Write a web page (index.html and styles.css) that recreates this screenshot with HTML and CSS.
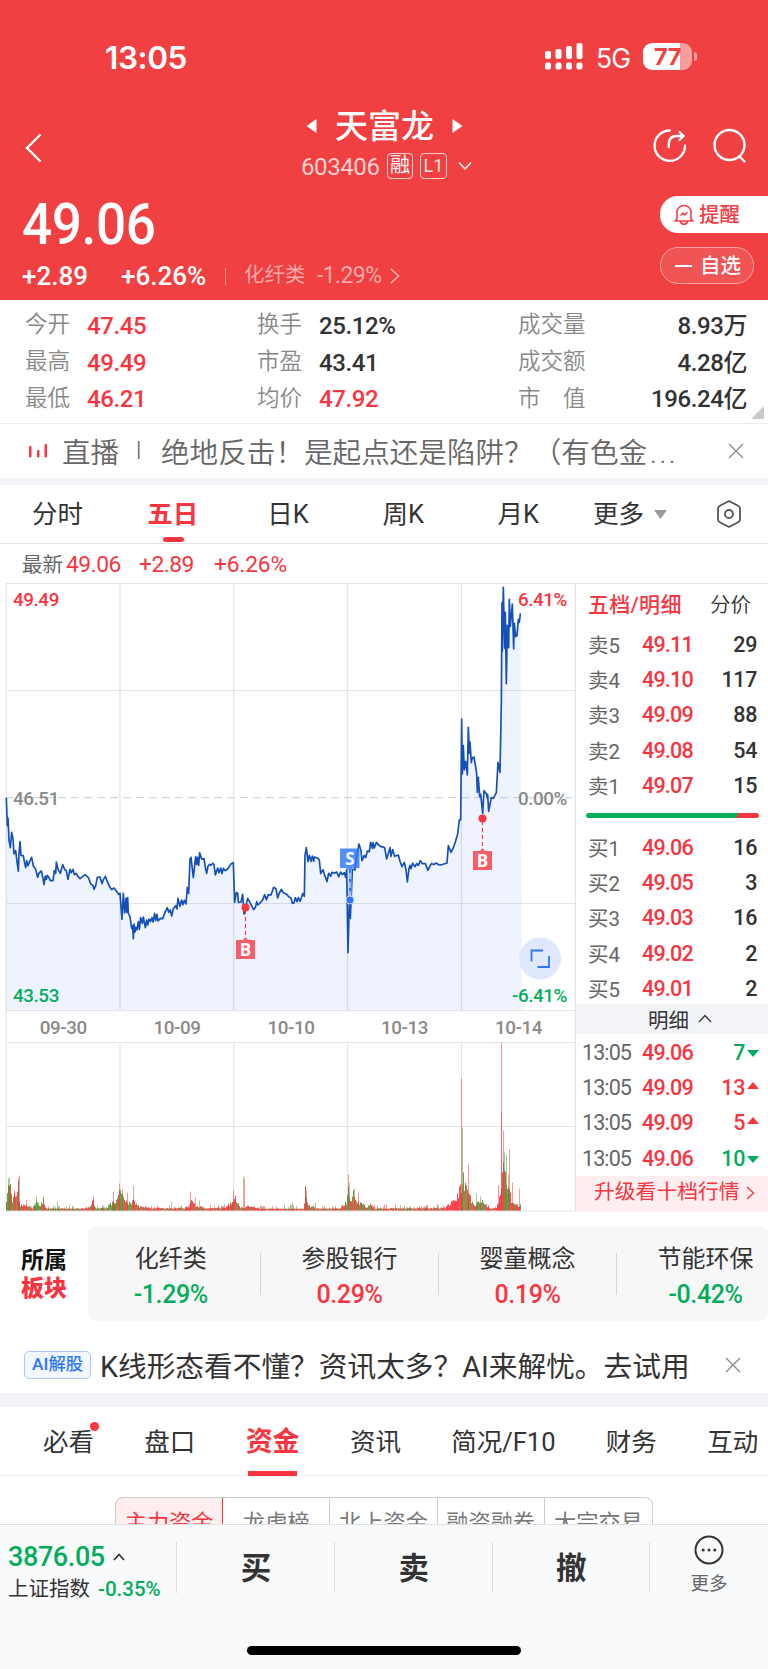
FILE: index.html
```html
<!DOCTYPE html>
<html lang="zh-CN">
<head>
<meta charset="utf-8">
<title>天富龙 603406</title>
<link rel="stylesheet" href="styles.css">
</head>
<body>
<div class="app">
  <header class="hero">
    <div class="status">
      <span class="clock">13:05</span>
      <svg class="signal" width="38" height="27" viewBox="0 0 38 27" fill="#fff"><rect x="0" y="8" width="6" height="8" rx="2"/><rect x="10.5" y="6" width="6" height="10" rx="2"/><rect x="21" y="3" width="6" height="13" rx="2"/><rect x="31.500" y="0" width="6" height="16" rx="2"/><rect x="0" y="19.500" width="6" height="7" rx="2"/><rect x="10.5" y="19.500" width="6" height="7" rx="2"/><rect x="21" y="19.500" width="6" height="7" rx="2"/><rect x="31.500" y="19.500" width="6" height="7" rx="2"/></svg>
      <span class="net">5G</span>
      <span class="battery"><b>77</b></span><i class="nub"></i>
    </div>
    <div class="nav">
      <svg class="back" width="18" height="30" viewBox="0 0 18 30" fill="none" stroke="#fff" stroke-width="2.4"><path d="M15.500 1.500 2 15l13.500 13.500"/></svg>
      <div class="title">
        <div class="name"><svg width="11" height="16" viewBox="0 0 11 16" fill="#fff"><path d="M10.500 1v14L.5 8z"/></svg><h1>天富龙</h1><svg width="11" height="16" viewBox="0 0 11 16" fill="#fff"><path d="M.5 1v14l10-7z"/></svg></div>
        <div class="code"><span class="num">603406</span><i class="tag rong">融</i><i class="tag lv">L1</i><svg width="14" height="10" viewBox="0 0 14 10" fill="none" stroke="#fff" stroke-width="1.5"><path d="M1 1.500l6 6.500 6-6.500"/></svg></div>
      </div>
      <div class="tools">
        <svg width="34" height="36" viewBox="0 0 34 36" fill="none" stroke="#fff" stroke-width="2.400" stroke-linecap="round" stroke-linejoin="round"><path d="M16.800 2.500A15.200 15.200 0 1 0 32 17.800"/><path d="M15.800 19v-3c0-5 3-8 8-8h6M26.500 4l4 4-4 4"/></svg>
        <svg width="34" height="36" viewBox="0 0 34 36" fill="none" stroke="#fff" stroke-width="2.400" stroke-linecap="round"><circle cx="16.500" cy="17" r="15"/><path d="M26.500 28.500l5 5"/></svg>
      </div>
    </div>
    <div class="quote">
      <div class="left">
        <div class="price">49.06</div>
        <div class="chg"><span class="c1">+2.89</span><span class="c2">+6.26%</span><i></i><span class="c3">化纤类</span><span class="c4">-1.29%</span><svg width="10" height="16" viewBox="0 0 10 16" fill="none" stroke="#fbb" stroke-width="1.500"><path d="M1 1l7.500 7L1 15"/></svg></div>
      </div>
      <div class="acts">
        <div class="alert"><svg width="20" height="22" viewBox="0 0 20 22" fill="none" stroke="#f33d45" stroke-width="1.600" stroke-linejoin="round" stroke-linecap="round"><path d="M3 15V8.500a7 7 0 0 1 14 0V15l2 2H1zM6.500 17.500a3.600 3.600 0 0 0 7 0M7 11l2-2 1.500 2L13 8.500"/></svg><span>提醒</span></div>
        <div class="fav"><i></i><span>自选</span></div>
      </div>
    </div>
  </header>

  <section class="stats">
    <span>今开</span><b class="red">47.45</b><span>换手</span><b>25.12%</b><span>成交量</span><b class="r">8.93万</b>
    <span>最高</span><b class="red">49.49</b><span>市盈</span><b>43.41</b><span>成交额</span><b class="r">4.28亿</b>
    <span>最低</span><b class="red">46.21</b><span>均价</span><b class="red">47.92</b><span>市　值</span><b class="r">196.24亿</b>
    <svg class="fold" width="13" height="13" viewBox="0 0 13 13" fill="#c8c8c8"><path d="M13 0v13H0z"/></svg>
  </section>

  <section class="live">
    <svg width="19" height="14" viewBox="0 0 19 14" fill="#f9353f"><rect x="0" y="2" width="2.500" height="11.500" rx="1"/><rect x="8" y="6" width="2.500" height="7.500" rx="1"/><rect x="15.500" y="0" width="2.500" height="13.500" rx="1"/></svg>
    <span class="lt">直播</span><span class="bar">l</span><span class="msg">绝地反击！是起点还是陷阱？（有色金<i>...</i></span>
    <svg class="x" width="16" height="16" viewBox="0 0 16 16" stroke="#888" stroke-width="1.300"><path d="M1 1l14 14M15 1L1 15"/></svg>
  </section>

  <nav class="ktabs">
    <span>分时</span><span class="on">五日</span><span>日K</span><span>周K</span><span>月K</span>
    <span class="more">更多<svg width="13" height="9" viewBox="0 0 13 9" fill="#999"><path d="M0 0h13L6.500 9z"/></svg></span>
    <svg width="26" height="28" viewBox="0 0 26 28" fill="none" stroke="#555" stroke-width="1.800" stroke-linejoin="round"><path d="M11.500 1.700q1.500-.9 3 0l8 4.300q1.500.9 1.500 2.600v10.800q0 1.700-1.500 2.600l-8 4.300q-1.500.9-3 0l-8-4.300Q2 21.100 2 19.400V8.600Q2 6.900 3.500 6z"/><circle cx="13" cy="14" r="4"/></svg>
  </nav>
  <div class="latest"><span class="zx">最新</span><b>49.06</b><b class="l2">+2.89</b><b class="l3">+6.26%</b></div>

  <main class="market">
    <svg class="chart" width="576" height="630" viewBox="0 582 576 630">
      <g stroke="#e3e3e3" stroke-width="1.200" fill="none">
        <path d="M6 583.500H576M6 690.500H575.500M6 903.500H575.500M6 1010.500H575.500M6 1042.500H575.500M6 1126.500H575.500M6 1211H575.500M6.200 583V1211M120 583V1010M120 1042V1211M233.700 583V1010M233.700 1042V1211M347.500 583V1010M347.500 1042V1211M461.500 583V1010M461.500 1042V1211M575.500 583V1211"/>
      </g>
      <path d="M6 797.700H576" stroke="#ccd8e2" stroke-width="1.300" stroke-dasharray="8 5"/>
      <g transform="translate(0 580) scale(.33333)">
        <path class="area" d=""/>
        <path class="line" d="M19 653L22 737 24 714 27 780 31 803 35 757 39 775 42 822 47 812 51 845 55 874 57 820 60 785 63 826 70 827 73 845 77 863 80 842 84 857 90 842 95 832 100 858 107 868 113 892 117 879 124 873 128 890 132 914 136 888 139 898 142 886 147 893 151 902 159 902 163 872 167 880 169 846 174 868 181 880 188 854 195 870 199 872 204 898 210 868 214 878 219 868 223 884 228 880 233 888 240 896 255 884 265 893 273 913 279 916 282 928 287 917 292 892 300 891 306 911 310 899 316 889 322 905 330 922 335 929 342 924 349 933 356 943 360 940 366 1018 370 940 374 999 378 955 380 997 383 953 385 1000 390 1010 395 1045 398 1037 400 1076 402 1032 405 1056 408 1042 411 1049 415 1025 418 1048 422 1013 427 1030 430 1011 436 1043 440 1020 443 1035 447 1017 451 1025 456 1013 459 1026 464 1000 467 1022 471 1003 474 1023 481 1015 488 1016 496 995 502 983 506 997 511 990 515 1008 520 986 528 977 531 987 534 955 540 979 545 960 549 974 553 961 558 972 562 922 566 940 570 838 573 832 580 893 587 830 590 853 593 832 596 856 599 818 605 837 612 836 617 868 620 880 624 858 629 853 633 856 638 850 642 853 646 885 653 864 657 878 662 864 666 881 670 865 676 872 683 867 692 853 700 848 704 967 709 938 713 939 715 967 723 966 728 943 732 1002 736 985 743 955 750 968 757 982 761 989 767 980 770 965 774 975 781 968 787 962 794 944 799 959 805 944 813 945 821 922 828 926 833 954 838 939 844 928 850 938 860 943 866 950 873 954 877 970 882 969 886 953 891 965 895 953 900 964 905 951 908 941 913 949 915 826 919 803 924 845 928 826 933 844 937 828 941 844 943 831 954 835 958 840 962 881 969 869 974 885 981 905 986 880 992 889 996 877 1003 880 1010 876 1016 890 1022 876 1027 884 1033 878 1037 892 1040 868 1044 1118 1050 890 1051 1015 1057 870 1062 868 1065 870 1068 840 1077 792 1083 812 1086 842 1093 826 1097 833 1102 813 1108 815 1112 787 1117 805 1119 788 1123 804 1129 787 1137 796 1144 800 1154 803 1160 837 1170 803 1173 829 1178 809 1184 829 1195 825 1200 844 1206 860 1213 847 1218 870 1222 906 1227 865 1230 856 1233 866 1238 850 1245 860 1250 851 1255 856 1261 842 1267 851 1276 851 1284 871 1290 858 1295 850 1301 854 1308 849 1318 855 1329 853 1341 849 1345 797 1353 817 1360 803 1366 786 1373 762 1378 720 1382 720 1385 417 1387 582 1390 497 1393 570 1397 544 1402 585 1405 442 1408 520 1410 486 1414 548 1417 533 1422 531 1430 580 1432 637 1435 592 1439 650 1442 642 1448 700 1452 632 1460 643 1462 655 1463 644 1466 694 1474 653 1480 655 1489 638 1494 547 1500 577 1504 370 1506 68 1507 214 1510 22 1514 205 1516 97 1519 311 1522 136 1526 203 1528 58 1531 139 1537 72 1541 207 1543 130 1547 170 1551 167 1555 118 1558 127 1561 100"/>
      </g>
      <g class="axis">
        <text x="13" y="606" class="up">49.49</text><text x="567" y="606" class="up" text-anchor="end">6.41%</text>
        <text x="13" y="804.500">46.51</text><text x="567" y="804.500" text-anchor="end">0.00%</text>
        <text x="13" y="1002" class="down">43.53</text><text x="567" y="1002" class="down" text-anchor="end">-6.41%</text>
        <text x="63.300" y="1034" text-anchor="middle">09-30</text><text x="177" y="1034" text-anchor="middle">10-09</text><text x="291" y="1034" text-anchor="middle">10-10</text><text x="404.500" y="1034" text-anchor="middle">10-13</text><text x="518.500" y="1034" text-anchor="middle">10-14</text>
      </g>
      <g class="volume"></g>
      <path d="M245.500 910V938M482.500 821V848" stroke="#f9353f" stroke-width="1.100" stroke-dasharray="4 3"/>
      <path d="M350 870V897" stroke="#9dbdf8" stroke-width="3"/><path d="M350 870V897" stroke="#2d76ff" stroke-width="2" stroke-dasharray="3 6"/>
      <circle cx="245.500" cy="907.500" r="4" fill="#f9353f"/><circle cx="482.500" cy="818.500" r="4" fill="#f9353f"/><circle cx="350" cy="900" r="4" fill="#2d76ff" stroke="#dbe7ff" stroke-width=".8"/>
      <path d="M236 940h7l2.500-3 2.500 3h7v19h-19zM473 851h7l2.500-3 2.500 3h7v19h-19z" fill="#f85d69"/>
      <path d="M340 848.500h19.500v19.500H353l-3 4-3-4h-7z" fill="#2d76ff" fill-opacity=".82"/>
      <g class="mark"><text x="245.500" y="955.500">B</text><text x="482.500" y="866.500">B</text><text x="350" y="864.500">S</text></g>
      <circle cx="540" cy="958.500" r="21" fill="#dfe8fd"/>
      <path d="M531.500 961.500V950.500H543M537.500 967H549V956" fill="none" stroke="#2d76ff" stroke-width="1.800"/>
    </svg>

    <aside class="book">
      <div class="bh"><b>五档/明细</b><span>分价</span></div>
      <div class="lv5">
        <div><span>卖5</span><b>49.11</b><em>29</em></div>
        <div><span>卖4</span><b>49.10</b><em>117</em></div>
        <div><span>卖3</span><b>49.09</b><em>88</em></div>
        <div><span>卖2</span><b>49.08</b><em>54</em></div>
        <div><span>卖1</span><b>49.07</b><em>15</em></div>
      </div>
      <div class="ratio"></div>
      <div class="lv5">
        <div><span>买1</span><b>49.06</b><em>16</em></div>
        <div><span>买2</span><b>49.05</b><em>3</em></div>
        <div><span>买3</span><b>49.03</b><em>16</em></div>
        <div><span>买4</span><b>49.02</b><em>2</em></div>
        <div><span>买5</span><b>49.01</b><em>2</em></div>
      </div>
      <div class="mx">明细<svg width="14" height="9" viewBox="0 0 14 9" fill="none" stroke="#444" stroke-width="1.500"><path d="M1 8l6-6.500L13 8"/></svg></div>
      <div class="lv5 deals">
        <div><span>13:05</span><b>49.06</b><em class="down">7</em><svg width="12" height="7"><path d="M0 0h12L6 7z" fill="#03ad5b"/></svg></div>
        <div><span>13:05</span><b>49.09</b><em class="up">13</em><svg class="u" width="12" height="7"><path d="M0 7h12L6 0z" fill="#f9353f"/></svg></div>
        <div><span>13:05</span><b>49.09</b><em class="up">5</em><svg class="u" width="12" height="7"><path d="M0 7h12L6 0z" fill="#f9353f"/></svg></div>
        <div><span>13:05</span><b>49.06</b><em class="down">10</em><svg width="12" height="7"><path d="M0 0h12L6 7z" fill="#03ad5b"/></svg></div>
      </div>
      <div class="upg">升级看十档行情<svg width="9" height="14" viewBox="0 0 9 14" fill="none" stroke="#f9353f" stroke-width="1.400"><path d="M1 1l6.500 6L1 13"/></svg></div>
    </aside>
  </main>

  <section class="sector">
    <div class="sl">所属<b>板块</b></div>
    <div class="cards">
      <div><span>化纤类</span><b class="down">-1.29%</b></div>
      <div><span>参股银行</span><b class="up">0.29%</b></div>
      <div><span>婴童概念</span><b class="up">0.19%</b></div>
      <div><span>节能环保</span><b class="down">-0.42%</b></div>
    </div>
  </section>

  <section class="ai">
    <i>AI解股</i><span>K线形态看不懂？资讯太多？AI来解忧。去试用</span>
    <svg class="x" width="16" height="16" viewBox="0 0 16 16" stroke="#888" stroke-width="1.300"><path d="M1 1l14 14M15 1L1 15"/></svg>
  </section>

  <nav class="tabs2"><span class="dot">必看</span><span>盘口</span><span class="on">资金</span><span>资讯</span><span>简况/F10</span><span>财务</span><span>互动</span></nav>
  <div class="segwrap"><div class="seg"><span class="on">主力资金</span><span>龙虎榜</span><span>北上资金</span><span>融资融券</span><span>大宗交易</span></div></div>

  <footer class="dock">
    <div class="row">
      <div class="idx">
        <div class="i1">3876.05<svg width="12" height="8" viewBox="0 0 12 8" fill="none" stroke="#333" stroke-width="1.700"><path d="M1 7l5-5.500L11 7"/></svg></div>
        <div class="i2">上证指数<span>-0.35%</span></div>
      </div>
      <div class="op">买</div><div class="op">卖</div><div class="op">撤</div>
      <div class="mo"><svg width="30" height="30" viewBox="0 0 30 30"><circle cx="15" cy="15" r="13.500" fill="none" stroke="#333" stroke-width="2"/><g fill="#333"><circle cx="9.200" cy="15" r="1.500"/><circle cx="15" cy="15" r="1.500"/><circle cx="20.800" cy="15" r="1.500"/></g></svg>更多</div>
    </div>
    <div class="home"></div>
  </footer>
</div>
<script src="chart.js"></script>
</body>
</html>
```
FILE: styles.css
```css
*{box-sizing:border-box}
body{margin:0;background:#fff;font-family:Roboto,"Noto Sans CJK SC",sans-serif;color:#333}
i,em{font-style:normal}
svg{display:block;flex:none}
.app{width:768px;height:1669px;overflow:hidden;display:flex;flex-direction:column}
.app>*{flex:none}
.red,.up{color:#f9353f}
.down{color:#03ad5b}

.hero{height:300px;background:#f04042;color:#fff}
.status{height:114px;padding:43px 0 0 105px;display:flex;align-items:flex-start}
.clock{font:600 31.5px/29px Inter,sans-serif;width:440px;letter-spacing:-.4px}
.net{font:400 26.5px/30px Inter,sans-serif;margin-left:13px;width:47px;letter-spacing:-.8px}
.battery{width:49px;height:27px;border-radius:9px;background:linear-gradient(90deg,#fff 37.5px,#f99c9d 37.5px);color:#f04042;text-align:center}
.battery b{font:700 23.500px/27px Inter,sans-serif;letter-spacing:-.5px}
.nub{width:3px;height:9px;margin:9px 0 0 2px;border-radius:0 3px 3px 0;background:#f99c9d}
.nav{height:76px;display:flex}
.back{margin:19px 0 0 25px}
.title{flex:none;margin-left:220px;width:242px}
.name{display:flex;align-items:center;height:36px;padding-left:43px;margin-top:-6px}
.name h1{margin:-4px 17.500px 0 18px;font-size:33px;line-height:36px;font-weight:500;font-family:"Noto Sans CJK SC",sans-serif}
.code{display:flex;align-items:center;height:28px;margin-top:8px;padding-left:38px}
.code .num{font-size:24px;line-height:28px;width:86px;letter-spacing:-.4px;color:#fbd0d0;padding-top:2px}
.tag{border:1.300px solid #fad0d0;border-radius:4px;height:26px;line-height:23px;text-align:center}
.rong{width:26px;font-size:20px}
.lv{width:27px;margin:0 11px 0 7px;font-size:18px;color:#fde0e0}
.tools{display:flex;margin:14px 0 0 148px;gap:26px}
.quote{height:110px;display:flex;justify-content:space-between}
.price{font-size:58px;line-height:60px;font-weight:500;letter-spacing:-.4px;margin:4px 0 0 22px;transform:scaleX(.915);transform-origin:0 50%}
.chg{display:flex;align-items:center;margin:7px 0 0 22px;height:30px;font-size:26px}
.chg .c1,.chg .c2{font-weight:500}
.chg .c1{width:99px}.chg .c2{width:104px}
.chg i{width:1px;height:17px;background:#f99}
.chg .c3{font-size:20.500px;line-height:30px;margin-left:18px;width:73px;color:#f9a9a9;margin-top:-2px}
.chg .c4{font-size:23px;width:73px;color:#f9a9a9;letter-spacing:-.6px;margin-top:-1px}
.acts{width:108px;padding-top:6px;font-size:20.500px;font-weight:500}
.acts span{margin-top:-3px}
.alert{height:37px;border-radius:18px 0 0 18px;background:#fff;color:#f33d45;display:flex;align-items:center;padding-left:14px;gap:5px}
.fav{margin-top:14px;width:94px;height:37px;border:1.300px solid #f7a3a4;border-radius:18px;background:#f15455;display:flex;align-items:center;padding-left:14px;gap:8px}
.fav i{width:17px;height:2px;background:#fff}

.stats{position:relative;height:124px;border-bottom:1.500px solid #ececec;padding:6px 21px 0 25px;display:grid;grid-template-columns:62px 170px 62px 199px 67px 1fr;grid-template-rows:repeat(3,36.700px);align-items:center;font-size:22.500px;line-height:36px}
.stats span{color:#888;white-space:nowrap;font-weight:350}
.stats b{font-size:24px;font-weight:500;letter-spacing:-.4px;padding-top:3px}
.stats .r{text-align:right;white-space:nowrap;justify-self:end}
.fold{position:absolute;right:4px;bottom:4px}

.live{height:54px;display:flex;align-items:center;padding-left:29px;font-size:28.600px;color:#666;font-weight:350}
.live .lt,.live .msg{margin-top:-2px}
.live .lt{margin-left:14px;width:74px}
.live .bar{width:25px;font-size:24px}
.live .msg{width:567px;white-space:nowrap}
.live .msg i{letter-spacing:2.500px;margin-left:3px}
.live .x{margin-top:-1px}

.ktabs{height:66px;border-top:7px solid #f2f4f8;border-bottom:1.500px solid #e5e5e5;display:grid;grid-template-columns:repeat(5,115.200px) 140px 26px;align-items:center;font-size:25.500px;text-align:center}
.ktabs span{height:58px;line-height:58px}
.ktabs .on{color:#f9353f;font-weight:600;position:relative}
.ktabs .on:after{content:"";position:absolute;left:47.500px;bottom:1px;width:21px;height:5px;border-radius:3px;background:#f9353f}
.ktabs .more{display:flex;align-items:center;gap:10px;padding-left:17px}
.latest{height:38px;display:flex;align-items:center;padding-left:22px;color:#f9353f;font-size:22.800px}
.latest .zx{font-size:20.500px;color:#666;width:44px}
.latest b{font-weight:450;letter-spacing:-.5px;width:73px;padding-top:2px}
.latest .l2{width:75px}
.latest .l3{letter-spacing:-.2px}

.market{height:630px;display:flex}
.line{fill:none;stroke:#1450b8;stroke-width:5;stroke-linejoin:round}
.area{fill:#4678f0;fill-opacity:.085}
.axis{font:500 18.800px Roboto,sans-serif;fill:#8a8a8a;letter-spacing:-.4px}
.axis .up{fill:#f9353f}.axis .down{fill:#03ad5b}
.mark{font:700 17px "Open Sans",sans-serif;fill:#fff;text-anchor:middle}
.book{width:192px;border-top:1.500px solid #e3e3e3;margin-top:1px;height:628px}
.bh{display:flex;height:43px;padding:1px 0 0 12px;line-height:41px;font-size:20.500px}
.bh b{color:#f9353f;font-weight:500;width:122px;font-size:21px;letter-spacing:.3px}
.bh span{font-weight:350}
.lv5 div{display:flex;align-items:center;height:35.200px;padding-left:12px;font-size:20.500px}
.lv5 span{width:54px;color:#666;margin-top:-1px}
.lv5 b{font-size:21.500px;font-weight:500;width:60px;color:#f9353f;letter-spacing:-.8px}
.lv5 em{font-size:21.500px;font-weight:500;width:55px;text-align:right;letter-spacing:-.4px}
.ratio{width:173px;height:5px;margin:10px 0 12px 10px;border-radius:3px;background:linear-gradient(120deg,#03ad5b 132px,#f9353f 132.500px)}
.mx{height:30px;background:#f2f4f8;display:flex;align-items:center;padding-left:72px;gap:9px;font-size:20.500px;margin-top:-2px}
.deals{padding-top:1px}
.deals div{padding-left:6px}
.deals span{width:60px;font-size:21.500px;letter-spacing:-.9px;margin-top:0}
.deals b{width:60px}
.deals em{width:43px;margin-right:2px}
.deals svg{margin-top:3px}
.deals svg.u{margin-top:-4px}
.upg{height:36px;background:#feeeef;color:#f9353f;font-size:20.800px;line-height:33px;display:flex;align-items:center;padding-left:18px;gap:6px;padding-bottom:2px}

.sector{height:109px;padding:15px 0 0 21px;display:flex}
.sl{width:67px;padding-top:20px;font-size:23px;line-height:28px;font-weight:700;color:#111}
.sl b{display:block;color:#f9353f}
.cards{width:680px;height:94px;background:#f7f7f7;border-radius:8px;display:grid;grid-template-columns:172.500px 178px 178px 178px;overflow:hidden}
.cards div{text-align:center;padding-top:14px}
.cards div:first-child{padding-right:7px}
.cards div:not(:last-child){background:linear-gradient(#d5d5d5,#d5d5d5) right 26px/1px 42px no-repeat}
.cards span{display:block;font-size:24px;line-height:36px}
.cards b{display:block;font-size:25px;line-height:36px;font-weight:500;letter-spacing:-.4px}

.ai{height:86px;border-bottom:14px solid #f2f4f8;display:flex;align-items:center;padding:16px 0 0 24px}
.ai i{width:67px;height:28px;border:1.500px solid #a9c8ff;border-radius:5px;background:#f3f7ff;color:#2d76ff;font-size:17.300px;line-height:24px;text-align:center;font-weight:500}
.ai span{font-size:28.700px;margin:-2px 0 0 9px;width:625px;white-space:nowrap}

.tabs2{height:69px;border-bottom:1.500px solid #ececec;display:flex;gap:50.300px;padding-left:43px;font-size:25.500px;line-height:71px;white-space:nowrap}
.tabs2 span{position:relative;height:67.500px}
.tabs2 .on{font-size:27px;font-weight:600;color:#f9353f}
.tabs2 .on:after{content:"";position:absolute;left:2.500px;bottom:-1px;width:49px;height:5px;background:#f9353f}
.tabs2 .dot:after{content:"";position:absolute;left:47px;top:15px;width:9px;height:9px;border-radius:50%;background:#f9353f}
.segwrap{height:48px;padding:21px 0 0 115px;overflow:hidden}
.seg{width:538px;height:50px;border:1.500px solid #ccc;border-radius:8px;display:grid;grid-template-columns:repeat(5,1fr);overflow:hidden;font-size:22.200px;color:#777;text-align:center;line-height:51px}
.seg span{border-right:1.500px solid #ccc}
.seg span:last-child{border:0}
.seg .on{color:#f9353f;background:#feeeef;border:1.500px solid #f9353f;border-radius:8px 0 0 8px;margin:-1px 0 0 -1px}

.dock{height:145px;background:#f9fafc;border-top:1.500px solid #e0e0e4}
.row{display:grid;grid-template-columns:177px 158px 157.500px 157.500px 118px;height:121px}
.idx{padding:15px 0 0 8px;background:linear-gradient(#ddd,#ddd) right 17px/1px 51px no-repeat}
.i1{display:flex;align-items:center;gap:8px;font-size:27px;line-height:34px;font-weight:500;color:#03ad5b;letter-spacing:-.4px}
.i2{font-size:20.500px;line-height:30px;white-space:nowrap}
.i2 span{color:#03ad5b;margin-left:8px;letter-spacing:0;font-weight:500}
.op{font-size:30.500px;font-weight:600;line-height:88px;text-align:center;background:linear-gradient(#ddd,#ddd) right 17px/1px 51px no-repeat}
.mo{padding-top:10px;font-size:18.500px;line-height:38px;color:#666;text-align:center}
.mo svg{margin:0 auto}
.home{width:274px;height:9px;border-radius:5px;background:#000;margin-left:247px}
```
FILE: chart.js
```js
// Close the price line down to the bottom of the price pane.
var line = document.querySelector('.line').getAttribute('d');
document.querySelector('.area').setAttribute('d', line + 'L1565 1290L19 1290Z');

// Volume profile: [x, height] key points in pixels above the baseline.
var base = [[6,14],[8,24],[10,26],[12,12],[15,17],[18,28],[19,10],[20,5],[28,5],[32,2],[37,11],[39,4],[43,12],[46,2],[80,2],[84,2],[90,4],[93,11],[96,2],[106,3],[110,7],[114,8],[118,16],[121,20],[126,12],[130,7],[133,10],[137,5],[145,3],[170,2],[189,3],[191,13],[195,4],[200,4],[205,2],[225,3],[231,9],[234,17],[239,4],[243,3],[247,5],[260,1.5],[303,1.5],[305,20],[307,12],[309,5],[316,2],[340,2],[346,10],[348,24],[350,10],[354,21],[356,9],[360,8],[365,4],[370,6],[374,2],[445,3],[450,7],[454,10],[458,18],[461,26],[463,34],[466,22],[469,16],[472,8],[475,5],[478,14],[481,11],[484,6],[490,2],[496,3],[501,22],[503,45],[505,38],[508,24],[512,8],[518,4],[521,8]];
// Single tall bars: [x, height, 1 = falling / 0 = rising].
var spikes = [[8,32,1],[9,33,1],[10,24,0],[14,20,0],[18,33,1],[19,35,0],[26,11,0],[36,14,1],[43,14,1],[57,9,1],[93,14,0],[113,19,0],[118,10,0],[119.5,27,0],[122.5,21,0],[127.5,18,0],[133.5,25,1],[171,9,1],[190,19,0],[195,13,0],[199.5,10,1],[233.5,20,0],[243.5,34,1],[244.5,32,0],[292,8,1],[305,25,0],[306.5,20,0],[315,8,1],[348.5,36,0],[349,28,1],[354.5,22,1],[358.5,18,0],[461.5,132,0],[462.5,83,1],[468.5,46,0],[476.5,17,1],[480,14,1],[498.5,25,0],[501.5,168,0],[501.5,98,0],[503.5,80,0],[504.5,58,1],[506,56,1],[508.5,36,1],[509.5,61,0],[512.5,28,0],[519.5,22,0]];
// Share of falling bars per x range.
var green = [[6,18,.8],[18,35,.4],[35,60,.65],[60,106,.6],[106,122,.75],[122,138,.6],[138,195,.3],[195,233,.15],[233,243,.6],[243,300,.3],[300,345,.4],[345,365,.5],[365,440,.35],[440,461,.1],[461,472,.75],[472,486,.6],[486,503,.1],[503,512,.6],[512,522,.3]];
var seed = 7;
function rnd() { seed = (seed * 16807) % 2147483647; return seed / 2147483647; }
function height(x) {
  for (var i = 1; i < base.length; i++) if (x <= base[i][0]) {
    var a = base[i - 1], b = base[i];
    return a[1] + (b[1] - a[1]) * (x - a[0]) / (b[0] - a[0]);
  }
  return 5;
}
var out = '';
function bar(x, h, g, o) {
  out += '<rect x="' + x + '" y="' + (1210.5 - h).toFixed(1) + '" width="1" height="' + h.toFixed(1) + '" fill="' + (g ? '#4b942c' : '#fb2c35') + '" fill-opacity="' + o + '"/>';
}
for (var x = 6; x < 521; x++) {
  var p = .3;
  green.forEach(function (r) { if (x >= r[0] && x < r[1]) p = r[2]; });
  bar(x, Math.max(1.8, height(x) * (.6 + rnd() * .6)), rnd() < p, .85);
  if (rnd() < .3) bar(x, 2 + rnd() * 3 + height(x) * .4, rnd() < p, .5);
}
spikes.forEach(function (s) { bar(Math.floor(s[0]), s[1], s[2], .5); });
document.querySelector('.volume').innerHTML = out;
```
